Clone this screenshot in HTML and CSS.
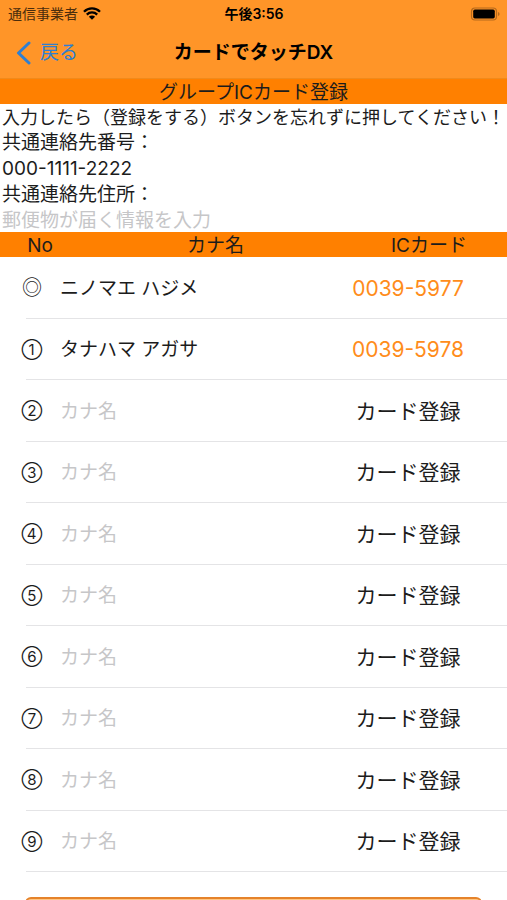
FILE: index.html
```html
<!DOCTYPE html>
<html lang="ja">
<head>
<meta charset="utf-8">
<meta name="viewport" content="width=device-width, initial-scale=1">
<title>カードでタッチDX</title>
<link rel="stylesheet" href="styles.css">
</head>
<body>
<header class="top">
  <div class="status">
    <div class="carrier">
      <span>通信事業者</span>
      <svg class="wifi" viewBox="0 0 18 13" aria-hidden="true">
        <path d="M1 4.7a11.3 11.3 0 0 1 16 0M3.8 7.6a7.4 7.4 0 0 1 10.4 0" fill="none" stroke="#000" stroke-width="2.3"/>
        <path d="M9 12.8 5.9 9.8a4.4 4.4 0 0 1 6.2 0z"/>
      </svg>
    </div>
    <span class="time">午後3:56</span>
    <svg class="battery" viewBox="0 0 30 14" aria-hidden="true">
      <rect x="1.5" y="1" width="25" height="12" rx="3.5" fill="none" stroke="#b56a1c" stroke-width="1.2"/>
      <rect x="3.2" y="2.6" width="21.6" height="8.8" rx="1.6"/>
      <path d="M28 5v4q1.6-.6 1.6-2t-1.6-2z" fill="#b56a1c"/>
    </svg>
  </div>
  <nav class="nav">
    <a class="back" href="#">
      <svg class="chevron" viewBox="0 0 15 24" aria-hidden="true"><path d="M13 2 2.500 12l10.500 10" fill="none" stroke="currentColor" stroke-width="3" stroke-linecap="round" stroke-linejoin="round"/></svg>
      <span>戻る</span>
    </a>
    <h1 class="title">カードでタッチDX</h1>
  </nav>
</header>
<main class="page">
  <h2 class="band">グループICカード登録</h2>
  <section class="contact">
    <p class="note">入力したら（登録をする）ボタンを忘れずに押してください！</p>
    <label for="phone">共通連絡先番号：</label>
    <input class="field" id="phone" type="tel" value="000-1111-2222">
    <label for="address">共通連絡先住所：</label>
    <input class="field" id="address" type="text" placeholder="郵便物が届く情報を入力">
  </section>
  <table class="members">
    <thead>
      <tr class="band heads"><th>No</th><th>カナ名</th><th>ICカード</th></tr>
    </thead>
    <tbody>
      <tr class="row"><td class="no leader">◎</td><td><input class="field" aria-label="カナ名" placeholder="カナ名" value="ニノマエ ハジメ"></td><td class="card"><button class="number" type="button">0039-5977</button></td></tr>
      <tr class="row"><td class="no">①</td><td><input class="field" aria-label="カナ名" placeholder="カナ名" value="タナハマ アガサ"></td><td class="card"><button class="number" type="button">0039-5978</button></td></tr>
      <tr class="row"><td class="no">②</td><td><input class="field" aria-label="カナ名" placeholder="カナ名"></td><td class="card"><button type="button">カード登録</button></td></tr>
      <tr class="row"><td class="no">③</td><td><input class="field" aria-label="カナ名" placeholder="カナ名"></td><td class="card"><button type="button">カード登録</button></td></tr>
      <tr class="row"><td class="no">④</td><td><input class="field" aria-label="カナ名" placeholder="カナ名"></td><td class="card"><button type="button">カード登録</button></td></tr>
      <tr class="row"><td class="no">⑤</td><td><input class="field" aria-label="カナ名" placeholder="カナ名"></td><td class="card"><button type="button">カード登録</button></td></tr>
      <tr class="row"><td class="no">⑥</td><td><input class="field" aria-label="カナ名" placeholder="カナ名"></td><td class="card"><button type="button">カード登録</button></td></tr>
      <tr class="row"><td class="no">⑦</td><td><input class="field" aria-label="カナ名" placeholder="カナ名"></td><td class="card"><button type="button">カード登録</button></td></tr>
      <tr class="row"><td class="no">⑧</td><td><input class="field" aria-label="カナ名" placeholder="カナ名"></td><td class="card"><button type="button">カード登録</button></td></tr>
      <tr class="row"><td class="no">⑨</td><td><input class="field" aria-label="カナ名" placeholder="カナ名"></td><td class="card"><button type="button">カード登録</button></td></tr>
    </tbody>
  </table>
  <div class="footer"><button class="submit" type="button" aria-label="登録をする"></button></div>
</main>
</body>
</html>
```
FILE: styles.css
```css
* { box-sizing: border-box; }

body {
  margin: 0;
  height: 100vh;
  overflow: hidden;
  display: flex;
  flex-direction: column;
  background: #fff;
  color: #1c1c1c;
  font: 19px/26px Inter, "Noto Sans CJK JP", sans-serif;
}

h1, h2, p { margin: 0; }

input, button {
  padding: 0;
  border: 0;
  background: none;
  color: inherit;
  font: inherit;
}

.top {
  background: #ff9528;
  color: #000;
  border-bottom: 1px solid #f08a1c;
}

.status {
  height: 27px;
  padding: 0 7px 0 8px;
  display: grid;
  grid-template-columns: 1fr auto 1fr;
  align-items: center;
  font-size: 14px;
  line-height: 20px;
}

.carrier {
  display: flex;
  align-items: center;
  gap: 5px;
  color: #4a2c0c;
}

.wifi { width: 18px; height: 13px; }
.time { font-weight: 600; }
.battery { width: 30px; height: 14px; justify-self: end; }

.nav {
  height: 51px;
  padding: 0 16px;
  display: grid;
  grid-template-columns: 1fr auto 1fr;
  align-items: center;
}

.back {
  display: flex;
  align-items: center;
  gap: 9px;
  color: #2e7fd2;
  text-decoration: none;
  line-height: 28px;
}

.chevron { width: 15px; height: 24px; }
.title { font-size: 19px; line-height: 28px; font-weight: 600; }

.page {
  flex: 1;
  min-height: 0;
  display: flex;
  flex-direction: column;
}

.band {
  height: 25px;
  background: #ff8000;
  font-size: 19px;
  line-height: 27px;
  font-weight: 400;
  text-align: center;
}

.contact {
  display: flex;
  flex-direction: column;
  padding: 2px 0 0 2px;
  margin-bottom: -2px;
}

.note {
  font-size: 18px;
  line-height: 24px;
  white-space: nowrap;
}

.field {
  display: block;
  width: 100%;
  height: 26px;
  outline: 0;
}

.field::placeholder { color: #c6c6c8; opacity: 1; }

.members {
  flex: 1;
  display: flex;
  flex-direction: column;
}

.members thead { display: block; }
.members tbody { flex: 1; display: grid; grid-auto-rows: 1fr; }
.members th, .members td { padding: 0; font-weight: 400; }
.members td:not(.no) { padding-top: 3px; }

.heads {
  display: grid;
  grid-template-columns: 80px 1fr 156px;
}

.row {
  display: grid;
  grid-template-columns: 60px 1fr 198px;
  grid-template-rows: 1fr 1px;
  align-items: center;
}

.row::after {
  content: "";
  grid-column: 1 / -1;
  height: 1px;
  margin-left: 26px;
  background: #e4e4e6;
}

.members .no {
  padding: 2px 0 0 4px;
  text-align: center;
  font-size: 15px;
}

.members .leader { font-size: 20px; }

.card { text-align: center; font-size: 21px; }
.number { color: #ff8c1a; }

.footer {
  height: 28px;
  padding: 25px 25px 0;
  overflow: hidden;
}

.submit {
  display: block;
  width: 100%;
  height: 50px;
  border: 2px solid #e5832a;
  border-radius: 6px;
  background: #ffc583;
}
```
